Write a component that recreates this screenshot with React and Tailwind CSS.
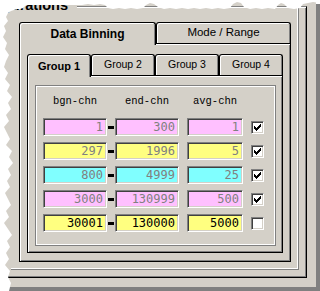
import React from "react";

const rows = [
  { a: "1", b: "300", c: "1", bg: "bg-[#ffc0ff]", on: true },
  { a: "297", b: "1996", c: "5", bg: "bg-[#ffff80]", on: true },
  { a: "800", b: "4999", c: "25", bg: "bg-[#80ffff]", on: true },
  { a: "3000", b: "130999", c: "500", bg: "bg-[#ffc0ff]", on: true },
  { a: "30001", b: "130000", c: "5000", bg: "bg-[#ffff80]", on: false, dark: true },
];

function Tab({ children, active, w, size }) {
  if (active) {
    return (
      <div
        className={`relative z-10 ${w} h-[23px] -mb-[2px] bg-[#d4d0c8] border-t border-l border-r border-black rounded-t-[3px] shadow-[inset_1px_1px_0_#fff,inset_-1px_0_0_#808080] flex items-center justify-center font-bold ${size}`}
      >
        {children}
      </div>
    );
  }
  return (
    <div
      className={`${w} h-[21px] border-t border-l border-r border-black rounded-t-[3px] shadow-[inset_1px_1px_0_#fff,inset_-1px_0_0_#808080] flex items-center justify-center ${size}`}
    >
      {children}
    </div>
  );
}

function Field({ value, w, bg, dark }) {
  return (
    <div
      className={`${w} h-[18px] ${bg} border border-[#808080] border-r-white border-b-white shadow-[inset_1px_1px_0_#404040,inset_-1px_-1px_0_#d4d0c8] flex items-center justify-end pr-[3px] font-['DejaVu_Sans_Mono',monospace] text-[12px] ${
        dark ? "text-black" : "text-[#808080]"
      }`}
    >
      {value}
    </div>
  );
}

function Check({ on }) {
  return (
    <div className="w-[13px] h-[13px] bg-white border border-[#808080] border-r-white border-b-white shadow-[inset_1px_1px_0_#404040,inset_-1px_-1px_0_#d4d0c8] flex items-center justify-center">
      {on && (
        <svg width="7" height="7" viewBox="0 0 7 7" shapeRendering="crispEdges">
          <rect x="6" y="0" width="1" height="1" fill="#000" />
          <rect x="5" y="1" width="2" height="1" fill="#000" />
          <rect x="0" y="2" width="1" height="1" fill="#000" />
          <rect x="4" y="2" width="3" height="1" fill="#000" />
          <rect x="0" y="3" width="2" height="1" fill="#000" />
          <rect x="3" y="3" width="3" height="1" fill="#000" />
          <rect x="0" y="4" width="5" height="1" fill="#000" />
          <rect x="1" y="5" width="3" height="1" fill="#000" />
          <rect x="2" y="6" width="1" height="1" fill="#000" />
        </svg>
      )}
    </div>
  );
}

// white torn-paper edge along the top and left
const torn =
  "320,0 320,3 313,2 308,3 303,4 300,8 294,9 288,8 284,4 281,3 278,5 275,9 268,8 262,9 256,8 250,9 244,7 241,3 237,2 233,4 230,8 224,9 218,8 212,9 206,8 200,9 194,8 188,9 182,8 176,9 170,8 164,9 158,7 154,4 150,3 146,5 143,8 137,9 131,8 125,9 119,8 113,9 108,8 105,5 100,4 94,5 88,4 82,5 77,5 74,5 66,5 58,5 50,5 42,5 34,5 27,5 25,6 23,8 20,9 17,9 14,10 11,11 8,13 6,17 8,21 4,26 6,31 3,37 7,43 5,49 9,55 6,61 4,67 8,73 5,79 10,85 7,91 12,97 8,103 11,109 6,115 9,121 4,127 7,133 10,139 6,145 12,151 9,157 13,163 8,169 11,175 7,181 10,187 5,193 8,199 11,205 6,211 9,217 4,223 8,229 12,235 7,241 10,247 6,253 9,259 5,265 10,271 8,277 11,283 9,291 0,291 0,0";

export default function App() {
  return (
    <div className="relative w-[320px] h-[291px] overflow-hidden bg-white font-['Liberation_Sans',Arial,sans-serif] text-black">
      {/* paper */}
      <div className="w-[316px] h-[287px] bg-[#d4d0c8] shadow-[4px_4px_0_#808080] pl-[3px] pt-[6px]">
        {/* outer frame */}
        <div className="w-[304px] h-[272px] border-t border-r border-b border-t-[#808080] border-r-black border-b-black shadow-[inset_0_1px_0_#fff,inset_-1px_-1px_0_#808080] pl-[8px]">
          <div className="w-[288px] h-[263px] border-r border-b border-[#808080] shadow-[inset_-1px_-1px_0_#fff] pl-[8px] pt-[15px]">
            {/* Data Binning tab control */}
            <div className="w-[272px]">
              <div className="flex items-end h-[21px]">
                <Tab active w="w-[137px]" size="text-[12px]">
                  Data Binning
                </Tab>
                <Tab w="w-[135px]" size="text-[11.5px]">
                  Mode / Range
                </Tab>
              </div>
              <div className="h-[219px] border border-black shadow-[inset_1px_1px_0_#fff,inset_-1px_-1px_0_#808080] pl-[7px] pt-[10px]">
                {/* Group tab control */}
                <div className="w-[256px]">
                  <div className="flex items-end h-[21px]">
                    <Tab active w="w-[64px]" size="text-[11px]">
                      Group 1
                    </Tab>
                    <Tab w="w-[64px]" size="text-[10.5px]">
                      Group 2
                    </Tab>
                    <Tab w="w-[64px]" size="text-[10.5px]">
                      Group 3
                    </Tab>
                    <Tab w="w-[64px]" size="text-[10.5px]">
                      Group 4
                    </Tab>
                  </div>
                  <div className="h-[178px] border border-black shadow-[inset_1px_1px_0_#fff,inset_-1px_-1px_0_#808080] pl-[7px] pt-[9px]">
                    <div className="w-[241px] h-[161px] border border-[#808080] shadow-[inset_1px_1px_0_#fff,inset_-1px_-1px_0_#fff] pl-[7px] pt-[9px]">
                      {/* headers */}
                      <div className="flex h-[14px] items-center font-['Liberation_Mono',monospace] text-[10.5px]">
                        <div className="w-[64px] text-center">bgn-chn</div>
                        <div className="w-[8px]" />
                        <div className="w-[64px] text-center">end-chn</div>
                        <div className="w-[8px]" />
                        <div className="w-[56px] text-center">avg-chn</div>
                      </div>
                      <div className="mt-[9px] flex flex-col gap-[6px]">
                        {rows.map((r, i) => (
                          <div key={i} className="flex items-center">
                            <Field value={r.a} w="w-[64px]" bg={r.bg} dark={r.dark} />
                            <div className="mx-[1px] w-[6px] h-[3px] bg-black" />
                            <Field value={r.b} w="w-[64px]" bg={r.bg} dark={r.dark} />
                            <div className="w-[8px]" />
                            <Field value={r.c} w="w-[56px]" bg={r.bg} dark={r.dark} />
                            <div className="w-[8px]" />
                            <Check on={r.on} />
                          </div>
                        ))}
                      </div>
                    </div>
                  </div>
                </div>
              </div>
            </div>
          </div>
        </div>
      </div>

      {/* group box caption, mostly torn away */}
      <div className="absolute left-[3px] top-[-3px] w-[74px] h-[16px] flex justify-end whitespace-nowrap bg-[#d4d0c8] pr-[9px] text-[14.5px] leading-[16px] font-bold">
        Configurations
      </div>

      {/* torn paper edge */}
      <svg className="absolute left-0 top-0 pointer-events-none" width="320" height="291">
        <polygon points={torn} fill="#fff" />
      </svg>
    </div>
  );
}
